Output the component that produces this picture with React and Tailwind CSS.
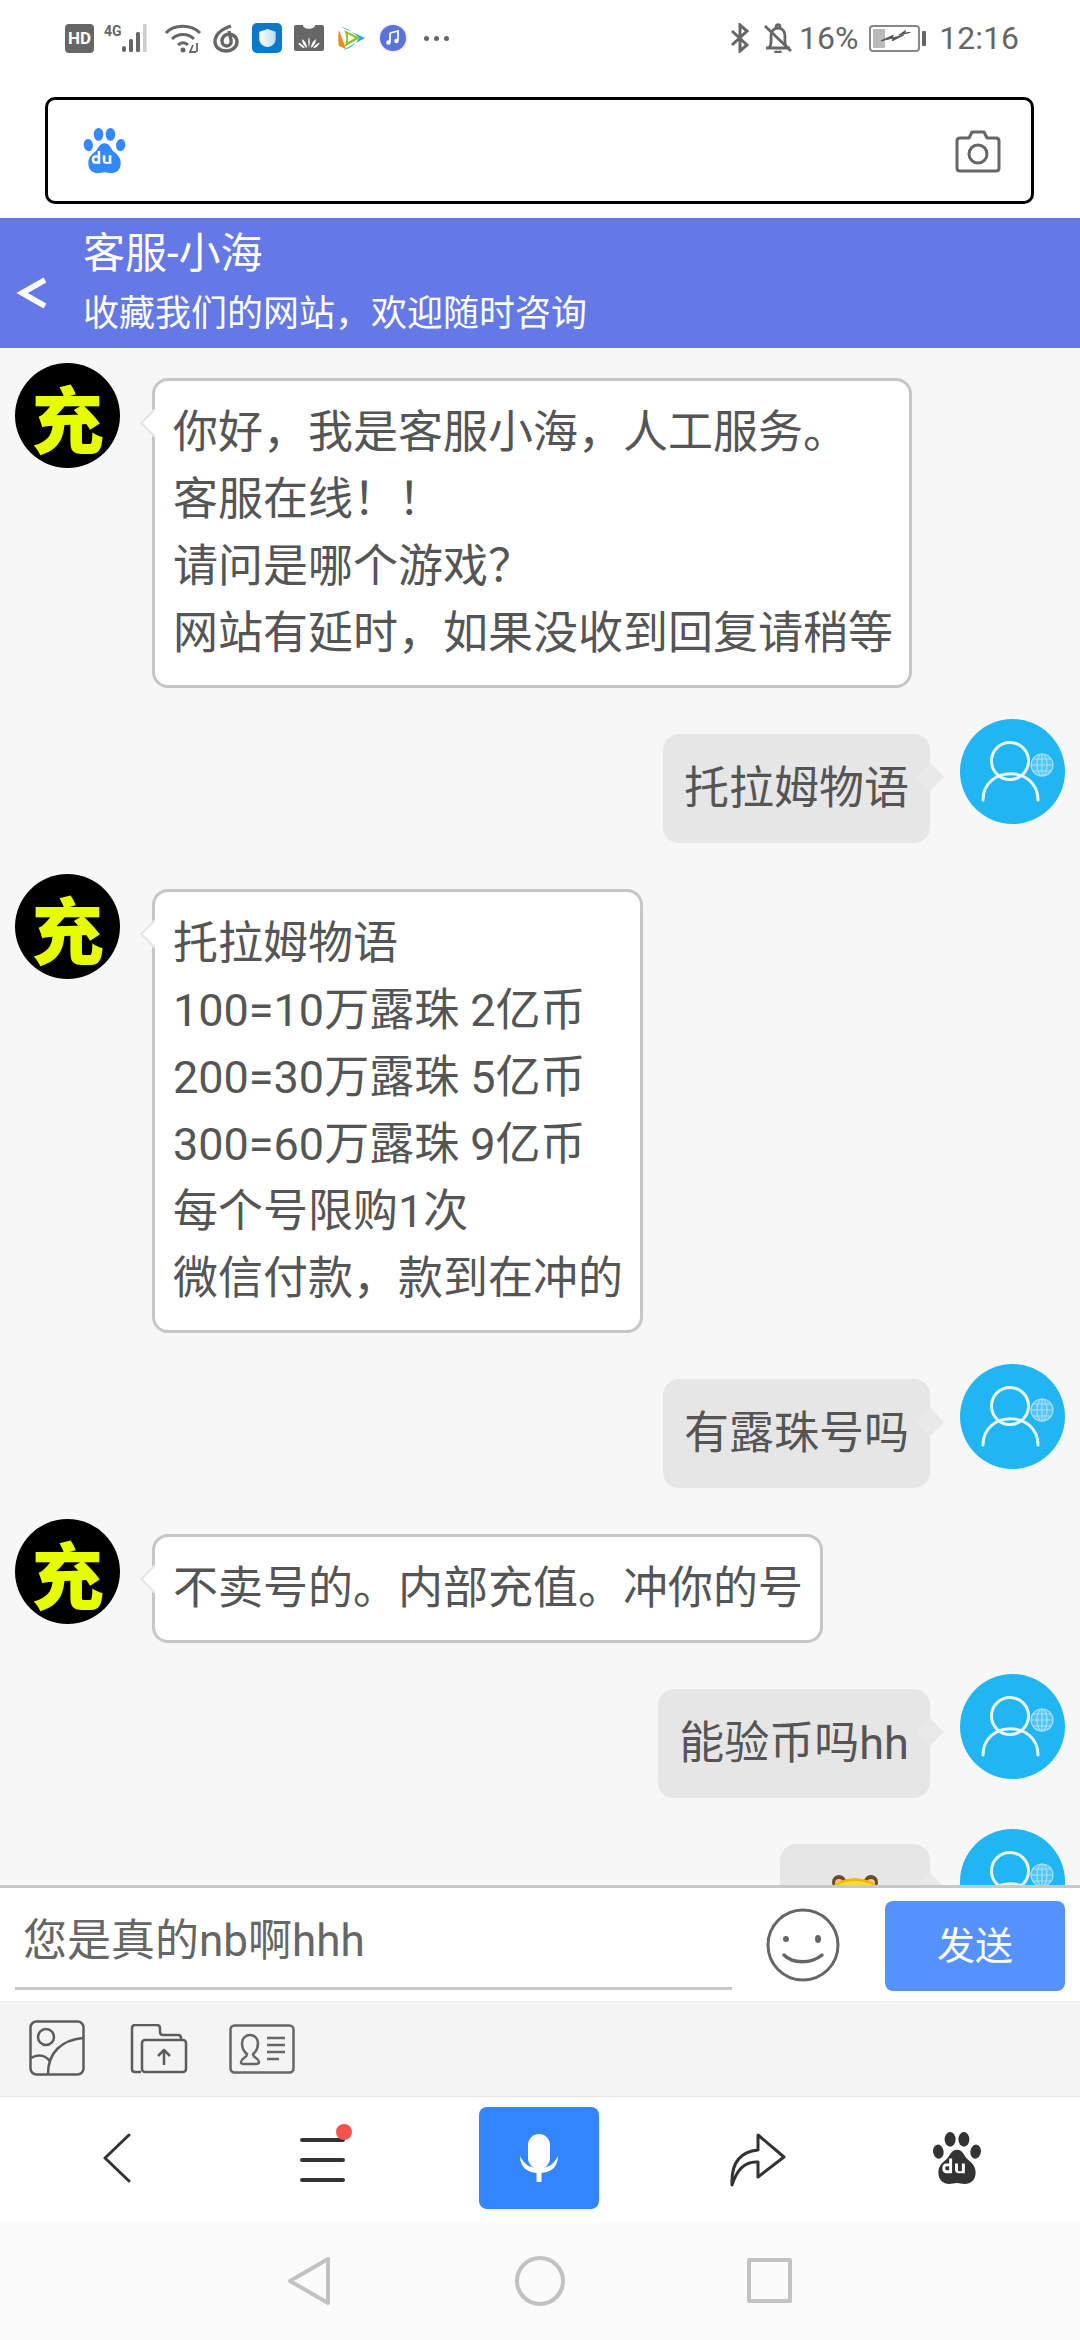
import React from "react";

const FONT = { fontFamily: 'Roboto, "Noto Sans CJK SC", sans-serif' };

function BaiduPaw({ className, fill, hole = "#fff" }) {
  return (
    <svg viewBox="0 0 50 54" className={className}>
      <ellipse cx="18" cy="7.5" rx="5.6" ry="7.5" fill={fill} />
      <ellipse cx="32" cy="7.5" rx="5.6" ry="7.5" fill={fill} />
      <ellipse cx="6" cy="20" rx="5.4" ry="7.2" fill={fill} transform="rotate(-8 6 20)" />
      <ellipse cx="44" cy="20" rx="5.4" ry="7.2" fill={fill} transform="rotate(8 44 20)" />
      <path
        d="M25 18c6 0 7 6 11 10 4 3 8 7 8 13 0 8-5 12-11 12-3 0-5-1-8-1s-5 1-8 1c-6 0-11-4-11-12 0-6 4-10 8-13 4-4 5-10 11-10z"
        fill={fill}
      />
      <path
        d="M20 27v15h-6c-2.500 0-4-2-4-5s1.600-5 4-5h3v-5zM17 35h-2.500c-1 0-1.500 1-1.500 2s.5 2 1.500 2H17zM23 32h3v7c0 .6.400 1 1 1h2c.6 0 1-.4 1-1v-7h3v10h-6c-2.500 0-4-1.200-4-3.500z"
        fill={hole}
      />
    </svg>
  );
}

function StatusBar() {
  const c = "#666";
  return (
    <div className="h-[90px] flex items-start justify-between pl-[65px] pr-[61px] pt-[22px] bg-white">
      <div className="flex items-center h-[32px]">
        <div className="w-[29px] h-[29px] rounded-[4px] bg-[#666] flex items-center justify-center text-white text-[17px] font-bold leading-none">
          HD
        </div>
        <svg viewBox="0 0 52 30" className="w-[52px] h-[30px] ml-[10px]">
          <text x="0" y="13" fontSize="14" fontWeight="700" fill={c} fontFamily="Roboto">4G</text>
          <rect x="18" y="23" width="4" height="6" rx="2" fill={c} />
          <rect x="25" y="16" width="4" height="13" rx="1.500" fill={c} />
          <rect x="32" y="9" width="4" height="20" rx="1.500" fill={c} />
          <rect x="39" y="1" width="3.500" height="28" fill="#ccc" />
        </svg>
        <svg viewBox="0 0 38 30" className="w-[38px] h-[30px] ml-[8px]" fill="none" stroke={c} strokeWidth="3">
          <path d="M2 10C10 1 27 1 36 10" />
          <path d="M8 16c6-6 16-6 22 0" />
          <path d="M14 22c3-3 7-3 10 0" />
          <circle cx="19" cy="27" r="2.500" fill={c} stroke="none" />
          <path d="M29 22l-3 7h6M33 20v9" strokeWidth="1.800" />
        </svg>
        <svg viewBox="0 0 28 30" className="w-[28px] h-[30px] ml-[10px]" fill="none" stroke={c} strokeWidth="3.400">
          <path d="M19 3C10 6 3 11 3 19c0 5 5 9 11 9s11-4 11-9-4-8-8-8-7 3-7 7 3 5 5 5 5-2 4-6l-2-9" />
        </svg>
        <div className="w-[30px] h-[30px] rounded-[5px] bg-[#0b78c8] ml-[12px] flex items-center justify-center">
          <svg viewBox="0 0 20 22" className="w-[19px] h-[20px]">
            <defs>
              <linearGradient id="shieldFill" x1="0" x2="1">
                <stop offset="0" stopColor="#ffffff" />
                <stop offset="1" stopColor="#bcdcf2" />
              </linearGradient>
            </defs>
            <path d="M10 1l9 3v8c0 5-4 8-9 9-5-1-9-4-9-9V4z" fill="url(#shieldFill)" />
          </svg>
        </div>
        <svg viewBox="0 0 30 26" className="w-[30px] h-[26px] ml-[12px]">
          <rect width="30" height="26" rx="2" fill={c} />
          <path d="M9 0c0 5 12 5 12 0z" fill="#fff" />
          <path d="M15 23c-1-5-1-8 0-11 1 3 1 6 0 11zM13 23c-3-2-5-5-5-9 3 2 5 5 5 9zM17 23c3-2 5-5 5-9-3 2-5 5-5 9zM11 23c-3 0-5-2-7-5 3 0 5 2 7 5zM19 23c3 0 5-2 7-5-3 0-5 2-7 5z" fill="#fff" />
        </svg>
        <svg viewBox="0 0 28 26" className="w-[28px] h-[26px] ml-[13px]">
          <path d="M2 5C1 10 1 17 2 21l7 3z" fill="#f08a1d" />
          <path d="M4 2l24 11L6 25c8-2 13-6 16-12C16 7 10 3 4 2z" fill="#27a8e0" />
          <path d="M7 5l16 8-16 9c3-5 3-12 0-17z" fill="#8fc31f" />
          <path d="M11 9l7 4-7 4z" fill="#fff" />
        </svg>
        <div className="w-[26px] h-[26px] rounded-full bg-[#5a72dc] ml-[15px] flex items-center justify-center shadow-[0_0_3px_#d9b8f0]">
          <svg viewBox="0 0 16 16" className="w-[16px] h-[16px]">
            <path d="M5 3l8-2v9.500" fill="none" stroke="#fff" strokeWidth="1.800" />
            <path d="M5 3v9" stroke="#fff" strokeWidth="1.800" />
            <circle cx="3.400" cy="12.500" r="2.200" fill="#fff" />
            <circle cx="11.400" cy="11" r="2.200" fill="#fff" />
          </svg>
        </div>
        <div className="flex gap-[5px] ml-[18px]">
          <span className="w-[5px] h-[5px] rounded-full bg-[#666]" />
          <span className="w-[5px] h-[5px] rounded-full bg-[#666]" />
          <span className="w-[5px] h-[5px] rounded-full bg-[#666]" />
        </div>
      </div>
      <div className="flex items-center h-[32px] text-[#666] text-[32px] leading-none" style={FONT}>
        <svg viewBox="0 0 20 30" className="w-[20px] h-[30px]" fill="none" stroke={c} strokeWidth="3">
          <path d="M2 8l15 14-7 6V2l7 6L2 22" />
        </svg>
        <svg viewBox="0 0 30 30" className="w-[30px] h-[30px] ml-[13px]" fill="none" stroke={c} strokeWidth="2.800">
          <path d="M3 25h24M6 25c3-4 2-7 2-12 0-5 3-8 7-8s7 3 7 8c0 5-1 8 2 12" />
          <path d="M2 3l26 25" />
          <path d="M12 28c1 2 5 2 6 0M13 4c0-3 4-3 4 0" />
        </svg>
        <span className="ml-[6px]">16%</span>
        <div className="ml-[11px] w-[51px] h-[27px] rounded-[4px] border-2 border-[#888] p-[2px] relative">
          <div className="w-[12px] h-full bg-[#bbb]" />
          <svg viewBox="0 0 36 18" className="absolute left-[9px] top-[2px] w-[34px] h-[18px]">
            <path d="M1 12l13-3-1 3 12-6-12 3 1-3zM20 6l12-3-6 1 1-3z" fill="#555" stroke="#555" strokeWidth="1" />
          </svg>
        </div>
        <div className="w-[4px] h-[15px] rounded-[1px] bg-[#666] ml-[2px]" />
        <span className="ml-[13px]">12:16</span>
      </div>
    </div>
  );
}

function SearchBar() {
  return (
    <div className="h-[128px] bg-white pt-[7px] px-[45px] pr-[46px]">
      <div className="h-[107px] border-[3px] border-black rounded-[10px] flex items-center justify-between pl-[35px] pr-[29px]">
        <BaiduPaw className="w-[43px] h-[46px]" fill="#3388ff" />
        <svg viewBox="0 0 48 44" className="w-[48px] h-[44px]" fill="none" stroke="#666" strokeWidth="3">
          <path d="M3 12c0-2 1-3 3-3h9l3-6h12l3 6h9c2 0 3 1 3 3v27c0 2-1 3-3 3H6c-2 0-3-1-3-3z" strokeLinejoin="round" />
          <circle cx="24" cy="25" r="9" />
        </svg>
      </div>
    </div>
  );
}

function ChatHeader() {
  return (
    <div className="h-[130px] bg-[#6478e6] flex items-center text-white shrink-0">
      <svg viewBox="0 0 32 32" className="w-[32px] h-[32px] ml-[16px] mt-[19px]" fill="none" stroke="#fff" strokeWidth="5.500">
        <path d="M29 3L6 16l23 13" />
      </svg>
      <div className="ml-[35px]">
        <div className="text-[42px] leading-[60px] -mt-[4px]">客服-小海</div>
        <div className="text-[36px] leading-[50px] mt-[5px]">收藏我们的网站，欢迎随时咨询</div>
      </div>
    </div>
  );
}

function ServiceAvatar() {
  return (
    <div className="w-[105px] h-[105px] rounded-full bg-black shrink-0 flex items-center justify-center overflow-hidden">
      <span className="text-[#e6ff00] text-[72px] font-black leading-none" style={{ fontFamily: '"Noto Sans CJK SC", sans-serif' }}>
        充
      </span>
    </div>
  );
}

function VisitorAvatar() {
  return (
    <div className="w-[105px] h-[105px] rounded-full bg-[#21b5f2] shrink-0">
      <svg viewBox="0 0 105 105" className="w-full h-full" fill="none" stroke="#fff">
        <g stroke="#e8f7fe" strokeWidth="3">
          <circle cx="50" cy="42" r="18.500" />
          <path d="M23 81c0-35 55-35 55 0" strokeLinecap="round" />
        </g>
        <g stroke="#a9e0f8" strokeWidth="1.200">
          <circle cx="82" cy="46" r="11" fill="#a9e0f8" fillOpacity="0.35" />
          <ellipse cx="82" cy="46" rx="5" ry="11" />
          <path d="M71 46h22M73 40h18M73 52h18M82 35v22" />
        </g>
      </svg>
    </div>
  );
}

function ServiceMessage({ lines, width }) {
  return (
    <div className="flex items-start pl-[15px]">
      <ServiceAvatar />
      <div className="relative ml-[32px] mt-[15px] bg-white border-[3px] border-[#c6c6c6] rounded-[16px] px-[18px] py-[18px]" style={{ width }}>
        <span className="absolute -left-[11px] top-[32px] w-[20px] h-[20px] rotate-45 bg-white border-l-[2px] border-b-[2px] border-[#e4e4e4]" />
        {lines.map((line) => (
          <div key={line} className="relative whitespace-nowrap">{line}</div>
        ))}
      </div>
    </div>
  );
}

function VisitorMessage({ children, width }) {
  return (
    <div className="flex items-start justify-end pr-[15px]">
      <div className="relative mt-[15px] bg-[#e6e6e6] rounded-[16px] h-[109px] flex items-center justify-center" style={{ width }}>
        <span className="absolute -right-[10px] top-[33px] w-[20px] h-[20px] rotate-45 bg-[#e9e9e9]" />
        <span className="relative whitespace-nowrap">{children}</span>
      </div>
      <div className="ml-[30px]">
        <VisitorAvatar />
      </div>
    </div>
  );
}

function TigerFace() {
  return (
    <svg viewBox="0 0 72 72" className="w-[72px] h-[72px]">
      <circle cx="20" cy="8" r="7" fill="#6e4a2a" />
      <circle cx="52" cy="8" r="7" fill="#6e4a2a" />
      <circle cx="20" cy="9" r="4" fill="#f0c48a" />
      <circle cx="52" cy="9" r="4" fill="#f0c48a" />
      <circle cx="36" cy="38" r="34" fill="#f7b500" />
      <ellipse cx="36" cy="22" rx="26" ry="15" fill="#ffd84a" />
      <path d="M22 21c3-3 6-3 8 0M42 21c3-3 6-3 8 0" stroke="#7a4f14" strokeWidth="2.500" fill="none" />
    </svg>
  );
}

function InputRow() {
  return (
    <div className="h-[116px] bg-white border-t-[3px] border-[#c8c8c8] flex shrink-0">
      <div className="w-[717px] ml-[15px] h-[102px] border-b-[3px] border-[#c8c8c8] flex items-center pl-[8px] pt-[6px] text-[#666] text-[44px]">
        您是真的nb啊hhh
      </div>
      <svg viewBox="0 0 74 74" className="w-[74px] h-[74px] ml-[34px] mt-[20px]" fill="none" stroke="#666" strokeWidth="3">
        <circle cx="37" cy="37" r="35" />
        <circle cx="20" cy="31" r="3" fill="#666" stroke="none" />
        <ellipse cx="52" cy="31" rx="3" ry="4" fill="#666" stroke="none" />
        <path d="M18 47c9 9 27 9 38 0" strokeWidth="3.500" strokeLinecap="round" />
      </svg>
      <div className="w-[180px] h-[90px] mt-[13px] ml-[45px] rounded-[8px] bg-[#5692fd] text-white text-[38px] flex items-center justify-center">
        发送
      </div>
    </div>
  );
}

function ToolRow() {
  return (
    <div className="h-[96px] bg-[#f4f4f4] border-b border-[#e5e5e5] flex items-center pl-[29px] shrink-0">
      <svg viewBox="0 0 56 56" className="w-[56px] h-[56px] -mt-[2px]" fill="none" stroke="#5c5c5c" strokeWidth="2.500">
        <rect x="1.500" y="1.500" width="53" height="53" rx="6" />
        <circle cx="17" cy="17" r="8" />
        <path d="M19 54c0-22 14-34 35-36M2 38c8-5 16-2 19 4" />
      </svg>
      <svg viewBox="0 0 58 50" className="w-[58px] h-[50px] ml-[45px]" fill="none" stroke="#5c5c5c" strokeWidth="2.500" strokeLinejoin="round">
        <path d="M11 48H5c-2 0-3-1-3-3V4c0-2 1-3 3-3h22c2 0 3 1 3 3v4c0 2 1 3 3 3h15c2 0 3 1 3 3v3" />
        <rect x="12" y="16" width="44" height="32" rx="3" />
        <path d="M34 41V27M28 32l6-6 6 6" />
      </svg>
      <svg viewBox="0 0 66 50" className="w-[66px] h-[50px] ml-[41px]" fill="none" stroke="#666" strokeWidth="2.500">
        <rect x="1.500" y="1.500" width="63" height="47" rx="4" />
        <path d="M12 38c0-4 6-4 6-8-4-3-5-7-5-11 0-5 4-8 8-8s8 3 8 8c0 4-1 8-5 11 0 4 6 4 6 8 0 2-2 2-4 2H15c-2 0-3 0-3-2z" />
        <path d="M38 14h18M38 21h18M38 28h18M38 35h12" />
      </svg>
    </div>
  );
}

function BrowserNav() {
  return (
    <div className="h-[125px] bg-white flex items-start shrink-0 relative">
      <svg viewBox="0 0 28 50" className="w-[28px] h-[50px] ml-[103px] mt-[36px]" fill="none" stroke="#333" strokeWidth="3" strokeLinecap="round" strokeLinejoin="round">
        <path d="M26 2L2 25l24 23" />
      </svg>
      <div className="relative w-[45px] ml-[169px] mt-[41px] flex flex-col gap-[16px]">
        <span className="h-[4px] rounded-full bg-[#333]" />
        <span className="h-[4px] rounded-full bg-[#333]" />
        <span className="h-[4px] rounded-full bg-[#333]" />
        <span className="absolute -right-[7px] -top-[14px] w-[16px] h-[16px] rounded-full bg-[#f4524d]" />
      </div>
      <div className="w-[120px] h-[102px] ml-[134px] mt-[10px] rounded-[8px] bg-[#3385ff] flex items-center justify-center">
        <svg viewBox="0 0 40 48" className="w-[40px] h-[48px]" fill="#fff">
          <rect x="9" y="0" width="22" height="35" rx="11" />
          <path d="M1 22c0 11 7 17 19 17s19-6 19-17c-4 8-9 12-19 12S5 30 1 22z" />
          <rect x="17.500" y="36" width="5" height="12" />
        </svg>
      </div>
      <svg viewBox="0 0 56 54" className="w-[56px] h-[54px] ml-[131px] mt-[36px]" fill="none" stroke="#333" strokeWidth="3" strokeLinejoin="round">
        <path d="M2 52C1 32 8 19 28 17V2l26 22-26 20V29C16 28 7 36 2 52z" />
      </svg>
      <BaiduPaw className="w-[50px] h-[53px] ml-[146px] mt-[35px]" fill="#333" />
    </div>
  );
}

function SystemNav() {
  return (
    <div className="h-[118px] bg-[#fbfbfb] flex items-start shrink-0">
      <svg viewBox="0 0 44 50" className="w-[44px] h-[50px] ml-[287px] mt-[34px]" fill="none" stroke="#c2c2c2" strokeWidth="4" strokeLinejoin="round">
        <path d="M41 3v44L3 25z" />
      </svg>
      <div className="w-[50px] h-[50px] ml-[184px] mt-[34px] rounded-full border-[4px] border-[#c2c2c2]" />
      <div className="w-[45px] h-[45px] ml-[182px] mt-[36px] rounded-[2px] border-[4px] border-[#c2c2c2]" />
    </div>
  );
}

export default function App() {
  return (
    <div className="w-[1080px] h-[2340px] flex flex-col overflow-hidden bg-white" style={FONT}>
      <StatusBar />
      <SearchBar />
      <ChatHeader />
      <div className="flex-1 min-h-0 overflow-hidden bg-[#f7f7f7] pt-[15px] flex flex-col gap-[31px] text-[#555] text-[45px] leading-[67px]">
        <ServiceMessage width={760} lines={["你好，我是客服小海，人工服务。", "客服在线！！", "请问是哪个游戏？", "网站有延时，如果没收到回复请稍等"]} />
        <VisitorMessage width={267}>托拉姆物语</VisitorMessage>
        <ServiceMessage width={491} lines={["托拉姆物语", "100=10万露珠 2亿币", "200=30万露珠 5亿币", "300=60万露珠 9亿币", "每个号限购1次", "微信付款，款到在冲的"]} />
        <VisitorMessage width={267}>有露珠号吗</VisitorMessage>
        <ServiceMessage width={671} lines={["不卖号的。内部充值。冲你的号"]} />
        <VisitorMessage width={272}>能验币吗hh</VisitorMessage>
        <VisitorMessage width={150}>
          <span className="block pt-[23px]">
            <TigerFace />
          </span>
        </VisitorMessage>
      </div>
      <InputRow />
      <ToolRow />
      <BrowserNav />
      <SystemNav />
    </div>
  );
}
